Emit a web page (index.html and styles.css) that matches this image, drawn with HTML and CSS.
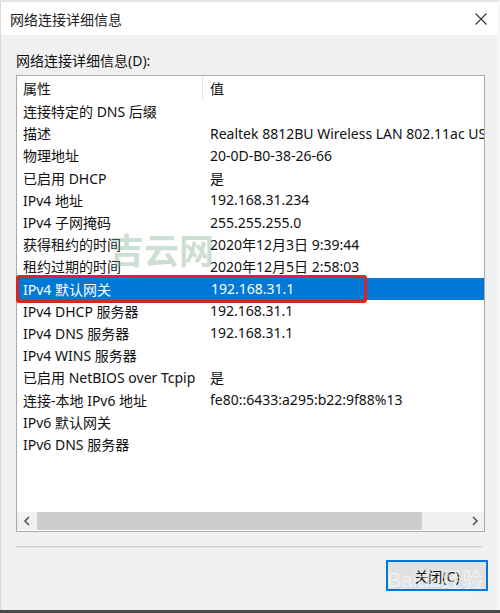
FILE: index.html
```html
<!DOCTYPE html>
<html lang="zh-CN">
  <head>
    <meta charset="UTF-8" />
    <meta name="viewport" content="width=device-width, initial-scale=1.0" />
    <title>网络连接详细信息</title>
    <link rel="stylesheet" href="styles.css">
  </head>
  <body>
    <div class="window">
      <div class="titlebar">
        <span class="title">网络连接详细信息</span>
        <svg class="close" width="12" height="12" viewBox="0 0 12 12">
          <path d="M0.5 0.5 L11.5 11.5 M11.5 0.5 L0.5 11.5" stroke="#333" stroke-width="1.1" fill="none" />
        </svg>
      </div>

      <div class="content">
        <div class="label">网络连接详细信息(D):</div>

        <div class="listbox">
          <div class="row header">
            <div class="col prop">属性</div>
            <div class="col val">值</div>
          </div>
          <div class="rows">
            <div class="row"><div class="col prop">连接特定的 DNS 后缀</div><div class="col val"></div></div>
            <div class="row"><div class="col prop">描述</div><div class="col val">Realtek 8812BU Wireless LAN 802.11ac USB NIC</div></div>
            <div class="row"><div class="col prop">物理地址</div><div class="col val">20-0D-B0-38-26-66</div></div>
            <div class="row"><div class="col prop">已启用 DHCP</div><div class="col val">是</div></div>
            <div class="row"><div class="col prop">IPv4 地址</div><div class="col val">192.168.31.234</div></div>
            <div class="row"><div class="col prop">IPv4 子网掩码</div><div class="col val">255.255.255.0</div></div>
            <div class="row"><div class="col prop">获得租约的时间</div><div class="col val">2020年12月3日 9:39:44</div></div>
            <div class="row"><div class="col prop">租约过期的时间</div><div class="col val">2020年12月5日 2:58:03</div></div>
            <div class="row selected"><div class="col prop">IPv4 默认网关</div><div class="col val">192.168.31.1</div></div>
            <div class="row"><div class="col prop">IPv4 DHCP 服务器</div><div class="col val">192.168.31.1</div></div>
            <div class="row"><div class="col prop">IPv4 DNS 服务器</div><div class="col val">192.168.31.1</div></div>
            <div class="row"><div class="col prop">IPv4 WINS 服务器</div><div class="col val"></div></div>
            <div class="row"><div class="col prop">已启用 NetBIOS over Tcpip</div><div class="col val">是</div></div>
            <div class="row"><div class="col prop">连接-本地 IPv6 地址</div><div class="col val">fe80::6433:a295:b22:9f88%13</div></div>
            <div class="row"><div class="col prop">IPv6 默认网关</div><div class="col val"></div></div>
            <div class="row"><div class="col prop">IPv6 DNS 服务器</div><div class="col val"></div></div>
          </div>

          <div class="scrollbar">
            <div class="arrow">
              <svg width="8" height="10" viewBox="0 0 8 10"><path d="M6 1 L2 5 L6 9" stroke="#555" stroke-width="1.6" fill="none" /></svg>
            </div>
            <div class="track">
              <div class="thumb"></div>
            </div>
            <div class="arrow">
              <svg width="8" height="10" viewBox="0 0 8 10"><path d="M2 1 L6 5 L2 9" stroke="#555" stroke-width="1.6" fill="none" /></svg>
            </div>
          </div>
        </div>

        <div class="separator"></div>

        <div class="buttons">
          <button class="btn">关闭(C)</button>
        </div>
      </div>

      <!-- annotations on the screenshot -->
      <div class="highlight"></div>
      <div class="mark">吉云网</div>
      <div class="baidu">Baidu经验<small>jingyan.baidu.com</small></div>
    </div>
    <div class="taskbar"></div>
  </body>
</html>
```

FILE: styles.css
```css
* {
  box-sizing: border-box;
  margin: 0;
  padding: 0;
}

body {
  width: 500px;
  height: 613px;
  overflow: hidden;
  background-color: #f0f0f0;
  font-family: "Noto Sans", "Noto Sans CJK SC", sans-serif;
  font-size: 14px;
  color: #111;
  display: flex;
  flex-direction: column;
}

.window {
  position: relative;
  flex: 1;
  border-top: 2px solid #e4e4e4;
  border-left: 1px solid #d8d8d8;
  border-right: 3px solid #f7f7f7;
}

.titlebar {
  height: 33px;
  background-color: #fff;
  display: flex;
  align-items: center;
  justify-content: space-between;
  padding: 0 10px 0 9px;
}

.title {
  font-size: 14px;
  color: #222;
}

.content {
  padding: 16px 11px 0 15px;
}

.label {
  height: 20px;
  line-height: 20px;
  margin-bottom: 4px;
}

.listbox {
  width: 469px;
  height: 457px;
  border: 1px solid #a9a9a9;
  background-color: #fff;
  display: flex;
  flex-direction: column;
}

.row {
  display: flex;
  height: 22.2px;
  align-items: center;
  white-space: nowrap;
}

.row.header {
  height: 24px;
}

.header .prop {
  border-right: 1px solid #e5e5e5;
  height: 100%;
  display: flex;
  align-items: center;
}

.rows {
  flex: 1;
}

.col {
  overflow: hidden;
}

.prop {
  width: 186px;
  padding-left: 6px;
}

.val {
  flex: 1;
  padding-left: 7px;
}

.selected {
  background-color: #0078d7;
  color: #fff;
  margin-left: 1px;
}

.selected .prop {
  padding-left: 5px;
}

.scrollbar {
  height: 18px;
  margin-bottom: 1px;
  background-color: #f0f0f0;
  display: flex;
}

.arrow {
  width: 19px;
  display: flex;
  align-items: center;
  justify-content: center;
}

.track {
  flex: 1;
  display: flex;
  padding-right: 43px;
}

.thumb {
  flex: 1;
  margin-left: 1px;
  background-color: #cdcdcd;
}

.separator {
  width: 466px;
  margin-top: 14px;
  background-color: #cfcfcf;
  border-bottom: 1px solid #e6e6e6;
  height: 2px;
}

.buttons {
  display: flex;
  justify-content: flex-end;
  padding-top: 12px;
}

.btn {
  width: 102px;
  height: 31px;
  margin-right: -2px;
  border: 2px solid #0078d7;
  background-color: #e1e1e1;
  font-family: inherit;
  font-size: 14px;
  color: #111;
}

.highlight {
  position: absolute;
  left: 15px;
  top: 273px;
  width: 351px;
  height: 28px;
  border: 3px solid #d9232d;
  border-radius: 3px;
}

.mark {
  position: absolute;
  left: 108px;
  top: 221px;
  font-family: "Noto Sans CJK SC", sans-serif;
  font-size: 35px;
  font-weight: bold;
  color: rgba(120, 170, 135, 0.38);
}

.baidu {
  position: absolute;
  left: 386px;
  top: 568px;
  font-family: "Liberation Sans", sans-serif;
  font-size: 21px;
  line-height: 20px;
  color: rgba(255, 255, 255, 0.5);
}

.baidu small {
  display: block;
  font-size: 10px;
  line-height: 12px;
  padding-left: 4px;
  color: rgba(255, 255, 255, 0.4);
}

.taskbar {
  height: 3px;
  background-color: #4a4a4a;
}
```
